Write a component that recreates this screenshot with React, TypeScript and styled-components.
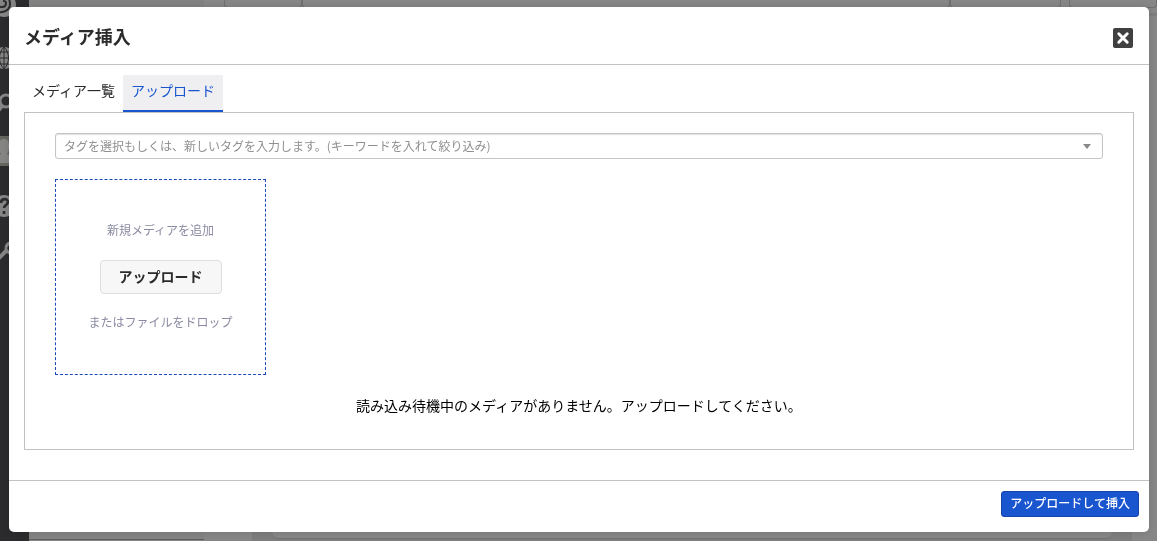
import React from "react";
import styled, { createGlobalStyle } from "styled-components";

const GlobalStyle = createGlobalStyle`
  *, *::before, *::after { box-sizing: border-box; }
  body {
    margin: 0;
    background: #868686;
    font-family: "Noto Sans CJK JP", sans-serif;
    font-size: 14px;
    line-height: 20px;
    color: #2b2b2b;
  }
  button, input { font: inherit; margin: 0; }
  h1, p { margin: 0; }
`;

const Page = styled.div`
  display: flex;
  height: 100vh;
  overflow: hidden;
`;

const Sidebar = styled.div`
  display: flex;
  flex-direction: column;
  flex: none;
  width: 29px;
  background: #2b2b2d;
`;

const SideIcons = styled.svg`
  display: block;
  width: 29px;
  height: 280px;
`;

const SubMenu = styled.div`
  flex: none;
  width: 175px;
  background: #828282;
  border-bottom: 1px solid #5c5c5c;
  margin-bottom: 1px;
`;

const Workspace = styled.div`
  display: flex;
  flex: 1;
  flex-direction: column;
  justify-content: space-between;
`;

const FieldRow = styled.div`
  display: flex;
  height: 8px;
  padding-left: 20px;
`;

const Field = styled.div<{ $width?: number; $gap?: number }>`
  flex: ${(p) => (p.$width ? `0 0 ${p.$width}px` : "1")};
  margin-right: ${(p) => p.$gap ?? 0}px;
  border: solid #6f6f6f;
  border-width: 0 1px 1px;
  border-radius: 0 0 4px 4px;
`;

const SectionRule = styled.div`
  height: 3px;
  margin: 5px 0 auto;
  background: #7d7d7d;
`;

const BottomStrip = styled.div`
  height: 15px;
  margin: 0 25px 0 48px;
  padding: 0 20px 2px;
  background: #7d7d7d;
`;

const PanelEdge = styled.div`
  height: 13px;
  background: #868686;
  border-bottom: 1px solid #707070;
  border-radius: 0 0 6px 6px;
`;

const Overlay = styled.div`
  position: fixed;
  inset: 0;
  padding: 7px 8px 9px 9px;
`;

const Dialog = styled.section`
  display: flex;
  flex-direction: column;
  min-height: 100%;
  background: #fff;
  border-radius: 5px;
  box-shadow: 0 0 6px rgba(0, 0, 0, 0.12);
`;

const Header = styled.header`
  display: flex;
  align-items: center;
  justify-content: space-between;
  height: 58px;
  padding: 4px 16px 0 15px;
  border-bottom: 1px solid #c2c2c2;
`;

const Title = styled.h1`
  padding-bottom: 4px;
  font-size: 18px;
  line-height: 26px;
  font-weight: 700;
`;

const CloseButton = styled.button`
  display: block;
  width: 20px;
  height: 20px;
  padding: 0;
  border: 0;
  border-radius: 2px;
  background: #404040;
  cursor: pointer;
  svg { display: block; }
`;

const Body = styled.div`
  flex: 1;
  padding: 10px 15px 30px;
`;

const Tabs = styled.div`
  display: flex;
`;

const Tab = styled.button<{ $active?: boolean }>`
  height: 37px;
  padding: 0 8px 5px;
  border: 0;
  border-bottom: 2px solid ${(p) => (p.$active ? "#1a55d0" : "transparent")};
  background: ${(p) => (p.$active ? "#efeff2" : "transparent")};
  color: ${(p) => (p.$active ? "#1a55d0" : "#2b2b2b")};
  cursor: pointer;
`;

const Panel = styled.div`
  padding: 20px 30px 34px;
  border: 1px solid #c2c2c2;
`;

const TagPicker = styled.label`
  display: flex;
  align-items: center;
  height: 26px;
  padding: 0 11px 0 8px;
  border: 1px solid #c4c4c4;
  border-radius: 3px;
  box-shadow: inset 0 1px 1px rgba(0, 0, 0, 0.12);
`;

const TagInput = styled.input`
  flex: 1;
  min-width: 0;
  height: 22px;
  padding: 0 0 2px;
  border: 0;
  outline: 0;
  background: transparent;
  font-size: 12px;
  &::placeholder { color: #8f8f8f; opacity: 1; }
`;

const DropZone = styled.div`
  display: flex;
  flex-direction: column;
  align-items: center;
  justify-content: center;
  gap: 19px;
  width: 211px;
  height: 196px;
  margin: 20px 0;
  border: 1px dashed #1a48b8;
`;

const Hint = styled.p`
  padding-bottom: 2px;
  font-size: 12px;
  line-height: 18px;
  color: #8a8aa2;
`;

const UploadButton = styled.button`
  height: 34px;
  padding: 0 18px 2px;
  border: 1px solid #dedede;
  border-radius: 4px;
  background: #f7f7f7;
  color: #2b2b2b;
  font-weight: 700;
  cursor: pointer;
`;

const Message = styled.p`
  text-align: center;
  color: #000;
`;

const Footer = styled.footer`
  display: flex;
  justify-content: flex-end;
  padding: 10px 10px 15px;
  border-top: 1px solid #c2c2c2;
`;

const SubmitButton = styled.button`
  height: 26px;
  padding: 0 8px 2px;
  border: 1px solid #1644a8;
  border-radius: 3px;
  background: #1a55d0;
  color: #fff;
  font-size: 12px;
  font-weight: 500;
  line-height: 20px;
  cursor: pointer;
`;

export default function App() {
  return (
    <>
      <GlobalStyle />
      <Page aria-hidden="true">
        <Sidebar>
          <SideIcons viewBox="0 0 29 280" fill="none">
            <circle cx="4" cy="5" r="12" fill="#858585" />
            <path d="M-2 12c6 1 12-2 12-8 0-5-3-8-7-8s-6 3-6 6 2 5 5 5 4-2 4-4-1-2-3-2" stroke="#2b2b2d" strokeWidth="2" />
            <circle cx="4" cy="58" r="11" fill="#858585" />
            <path d="M4 47v22M-7 58h22M-5 52h18M-5 64h18M4 47c-6 6-6 16 0 22M4 47c6 6 6 16 0 22" stroke="#2b2b2d" />
            <circle cx="6" cy="101" r="6" stroke="#858585" strokeWidth="3" />
            <path d="M2 106l-6 7" stroke="#858585" strokeWidth="4" />
            <rect x="-12" y="136" width="29" height="30" rx="4" fill="#66665f" />
            <path d="M-8 163c0-6 7-7 9-9-4-7-3-15 3-15s7 8 3 15c2 2 8 3 8 9z" fill="#858583" />
            <circle cx="4" cy="206" r="11" fill="#858585" />
            <path d="M1 203c0-5 7-5 7-1 0 3-4 3-4 6M4 211v3" stroke="#2b2b2d" strokeWidth="2.6" />
            <path d="M-2 259l9-9" stroke="#858585" strokeWidth="4" />
            <path d="M14 244a5 5 0 1 0 1 7" stroke="#858585" strokeWidth="3" />
          </SideIcons>
        </Sidebar>
        <SubMenu />
        <Workspace>
          <FieldRow>
            <Field $width={78} />
            <Field $width={648} />
            <Field $width={111} $gap={8} />
            <Field />
          </FieldRow>
          <SectionRule />
          <BottomStrip>
            <PanelEdge />
          </BottomStrip>
        </Workspace>
      </Page>
      <Overlay>
        <Dialog role="dialog" aria-modal="true" aria-labelledby="dialog-title">
          <Header>
            <Title id="dialog-title">メディア挿入</Title>
            <CloseButton type="button" aria-label="閉じる">
              <svg width="20" height="20" viewBox="0 0 20 20" fill="none">
                <path d="M5.8 5.8l8.4 8.4M14.2 5.8l-8.4 8.4" stroke="#fff" strokeWidth="3" strokeLinecap="round" />
              </svg>
            </CloseButton>
          </Header>
          <Body>
            <Tabs role="tablist">
              <Tab type="button" role="tab" aria-selected="false">メディア一覧</Tab>
              <Tab type="button" role="tab" aria-selected="true" $active>アップロード</Tab>
            </Tabs>
            <Panel role="tabpanel">
              <TagPicker>
                <TagInput
                  type="text"
                  role="combobox"
                  aria-expanded="false"
                  aria-label="タグ"
                  placeholder="タグを選択もしくは、新しいタグを入力します。(キーワードを入れて絞り込み)"
                />
                <svg width="8" height="5" viewBox="0 0 8 5" aria-hidden="true">
                  <path d="M0 0h8L4 5z" fill="#888" />
                </svg>
              </TagPicker>
              <DropZone>
                <Hint>新規メディアを追加</Hint>
                <UploadButton type="button">アップロード</UploadButton>
                <Hint>またはファイルをドロップ</Hint>
              </DropZone>
              <Message>読み込み待機中のメディアがありません。アップロードしてください。</Message>
            </Panel>
          </Body>
          <Footer>
            <SubmitButton type="button">アップロードして挿入</SubmitButton>
          </Footer>
        </Dialog>
      </Overlay>
    </>
  );
}
